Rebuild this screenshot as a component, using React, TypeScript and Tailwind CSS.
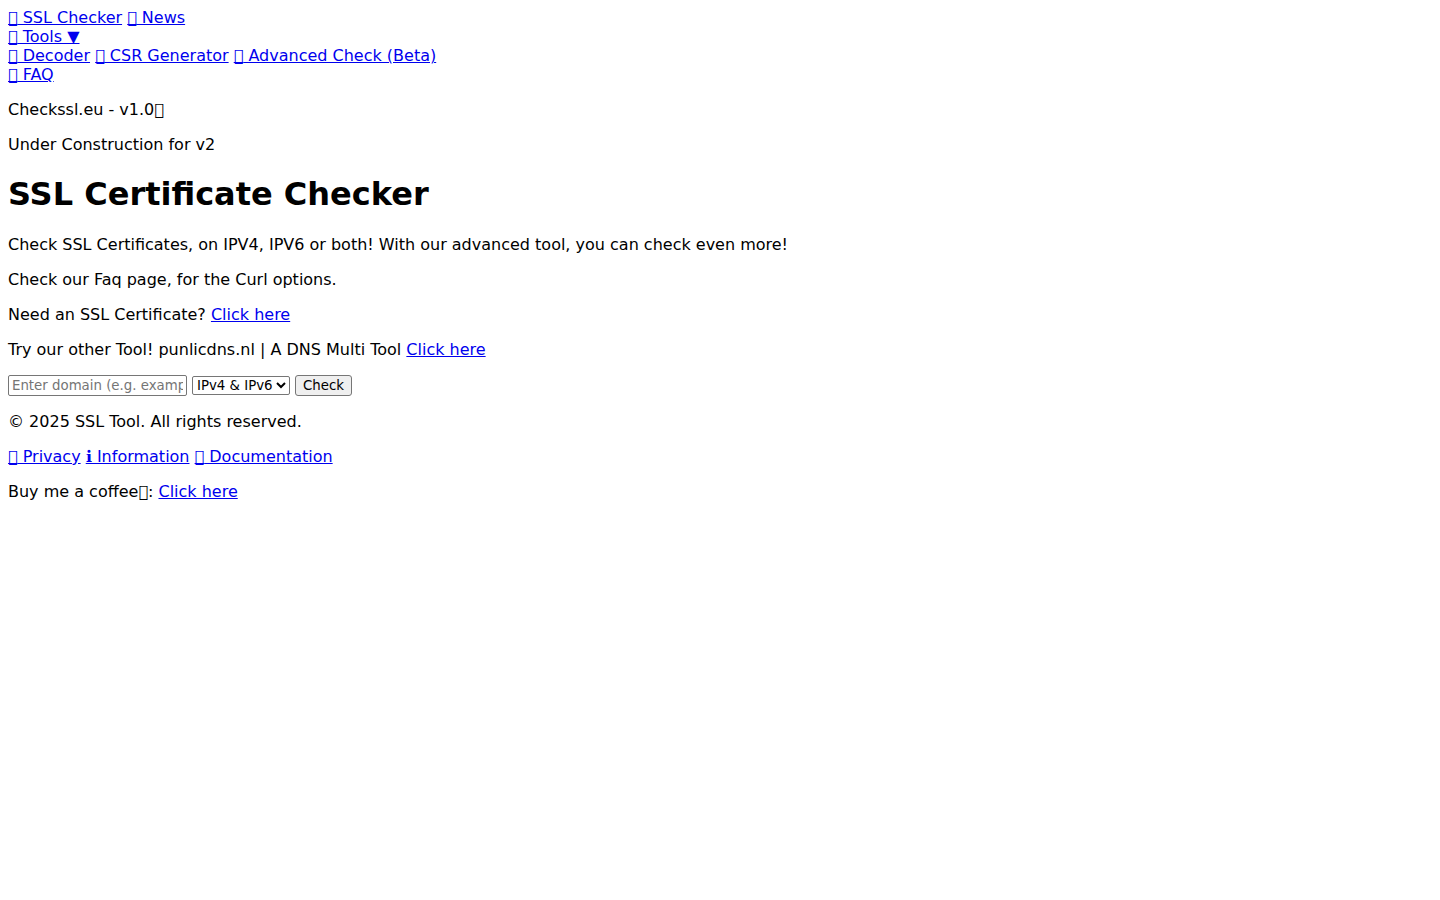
import type { ReactNode } from "react";

// Private-use code point, drawn as the font's empty glyph box.
function Glyph() {
  return <span className="[text-decoration-skip-ink:none]">{"\u{F0000}"}</span>;
}

function Link({ children }: { children: ReactNode }) {
  return (
    <a href="#" className="text-[#0000ee] underline">
      {children}
    </a>
  );
}

export default function App() {
  return (
    <div className="m-2 flex flex-col gap-4 font-['DejaVu_Sans',sans-serif] text-base leading-[19px] text-black">
      <nav>
        <Link><Glyph /> SSL Checker</Link> <Link><Glyph /> News</Link>
        <div>
          <Link><Glyph /> Tools ▼</Link>
          <div>
            <Link><Glyph /> Decoder</Link> <Link><Glyph /> CSR Generator</Link>{" "}
            <Link><Glyph /> Advanced Check (Beta)</Link>
          </div>
        </div>
        <Link><Glyph /> FAQ</Link>
      </nav>
      <p>Checkssl.eu - v1.0<Glyph /></p>
      <p>Under Construction for v2</p>
      <h1 className="my-[5px] text-[32px] leading-[39px] font-bold">SSL Certificate Checker</h1>
      <p>Check SSL Certificates, on IPV4, IPV6 or both! With our advanced tool, you can check even more!</p>
      <p>Check our Faq page, for the Curl options.</p>
      <p>
        Need an SSL Certificate? <Link>Click here</Link>
      </p>
      <p>
        Try our other Tool! punlicdns.nl | A DNS Multi Tool <Link>Click here</Link>
      </p>
      <form
        className="flex items-center gap-[5px] [font-size:smaller]"
        onSubmit={(e) => e.preventDefault()}
      >
        <input
          type="text"
          aria-label="Domain"
          placeholder="Enter domain (e.g. example.com)"
          className="h-[21px] w-[179px] rounded-xs border border-[#767676] px-[3px] placeholder:text-[#757575]"
        />
        <select aria-label="IP version" className="h-[19px] w-[98px] rounded-xs border border-[#767676] bg-white">
          <option>IPv4 &amp; IPv6</option>
          <option>IPv4</option>
          <option>IPv6</option>
        </select>
        <button className="h-[21px] w-[57px] rounded-[3px] border border-[#767676] bg-[#efefef] leading-[17px]">
          Check
        </button>
      </form>
      <footer className="flex flex-col gap-4">
        <p>© 2025 SSL Tool. All rights reserved.</p>
        <p>
          <Link><Glyph /> Privacy</Link> <Link>ℹ Information</Link> <Link><Glyph /> Documentation</Link>
        </p>
        <p>
          Buy me a coffee<Glyph />: <Link>Click here</Link>
        </p>
      </footer>
    </div>
  );
}
